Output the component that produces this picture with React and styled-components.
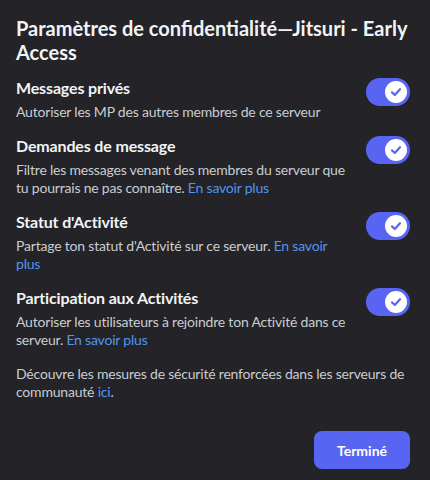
import React, { useState } from 'react';
import styled, { createGlobalStyle } from 'styled-components';

const GlobalStyle = createGlobalStyle`
  html, body {
    margin: 0;
    padding: 0;
    background-color: #232328;
  }
  body {
    font-family: Lato, "Noto Sans", sans-serif;
  }
`;

const Modal = styled.div`
  width: 430px;
  height: 480px;
  box-sizing: border-box;
  padding: 16px 20px 11px 16px;
  background-color: #232328;
  display: flex;
  flex-direction: column;
`;

const Title = styled.h1`
  margin: 0 0 14px;
  font-size: 20px;
  line-height: 24px;
  font-weight: 700;
  color: #f2f3f5;
`;

const Settings = styled.div`
  display: flex;
  flex-direction: column;
  gap: 15px;
`;

const Row = styled.div`
  display: flex;
  align-items: flex-start;
  gap: 12px;
`;

const RowText = styled.div`
  flex: 1;
  display: flex;
  flex-direction: column;
  gap: 5px;
`;

const RowTitle = styled.div`
  font-size: 16px;
  line-height: 20px;
  font-weight: 700;
  letter-spacing: -0.15px;
  color: #f2f3f5;
`;

const Description = styled.div`
  font-size: 14px;
  line-height: 18px;
  letter-spacing: -0.2px;
  color: #c9cdd2;
`;

const Link = styled.a`
  color: #5197ed;
  text-decoration: none;
  cursor: pointer;
`;

const Footer = styled.p`
  margin: 16px 0 0;
  font-size: 14px;
  line-height: 18px;
  letter-spacing: -0.2px;
  color: #c9cdd2;
`;

const Actions = styled.div`
  margin-top: auto;
  display: flex;
  justify-content: flex-end;
`;

const DoneButton = styled.button`
  width: 96px;
  height: 38px;
  border: none;
  border-radius: 8px;
  background-color: #5865f2;
  color: #ffffff;
  font-family: inherit;
  font-size: 14px;
  font-weight: 700;
  cursor: pointer;
`;

const Switch = styled.button`
  flex-shrink: 0;
  width: 44px;
  height: 28px;
  padding: 3px;
  border: none;
  border-radius: 14px;
  background-color: ${({ $on }) => ($on ? '#5865f2' : '#80848e')};
  display: flex;
  justify-content: ${({ $on }) => ($on ? 'flex-end' : 'flex-start')};
  align-items: center;
  cursor: pointer;
`;

const Knob = styled.span`
  width: 22px;
  height: 22px;
  border-radius: 50%;
  background-color: #ffffff;
  display: flex;
  align-items: center;
  justify-content: center;
`;

const Toggle = ({ on, onClick }) => (
  <Switch $on={on} onClick={onClick}>
    <Knob>
      {on ? (
        <svg width="14" height="14" viewBox="0 0 14 14">
          <path d="M3 7.4 L5.8 10 L11 4.2" fill="none" stroke="#5865f2" strokeWidth="2.2" strokeLinecap="round" strokeLinejoin="round" />
        </svg>
      ) : (
        <svg width="12" height="12" viewBox="0 0 12 12">
          <path d="M3 3 L9 9 M9 3 L3 9" stroke="#80848e" strokeWidth="2" strokeLinecap="round" />
        </svg>
      )}
    </Knob>
  </Switch>
);

const settings = [
  {
    id: 'dm',
    title: 'Messages privés',
    text: 'Autoriser les MP des autres membres de ce serveur',
  },
  {
    id: 'requests',
    title: 'Demandes de message',
    text: 'Filtre les messages venant des membres du serveur que tu pourrais ne pas connaître.',
    link: true,
  },
  {
    id: 'status',
    title: "Statut d'Activité",
    text: "Partage ton statut d'Activité sur ce serveur.",
    link: true,
  },
  {
    id: 'activities',
    title: 'Participation aux Activités',
    text: 'Autoriser les utilisateurs à rejoindre ton Activité dans ce serveur.',
    link: true,
  },
];

const App = () => {
  const [values, setValues] = useState({ dm: true, requests: true, status: true, activities: true });

  const flip = (id) => setValues((v) => ({ ...v, [id]: !v[id] }));

  return (
    <>
      <GlobalStyle />
      <Modal>
        <Title>Paramètres de confidentialité—Jitsuri - Early Access</Title>
        <Settings>
          {settings.map((s) => (
            <Row key={s.id}>
              <RowText>
                <RowTitle>{s.title}</RowTitle>
                <Description>
                  {s.text}
                  {s.link && (
                    <>
                      {' '}
                      <Link>En savoir plus</Link>
                    </>
                  )}
                </Description>
              </RowText>
              <Toggle on={values[s.id]} onClick={() => flip(s.id)} />
            </Row>
          ))}
        </Settings>
        <Footer>
          Découvre les mesures de sécurité renforcées dans les serveurs de communauté <Link>ici</Link>.
        </Footer>
        <Actions>
          <DoneButton>Terminé</DoneButton>
        </Actions>
      </Modal>
    </>
  );
};

export default App;
